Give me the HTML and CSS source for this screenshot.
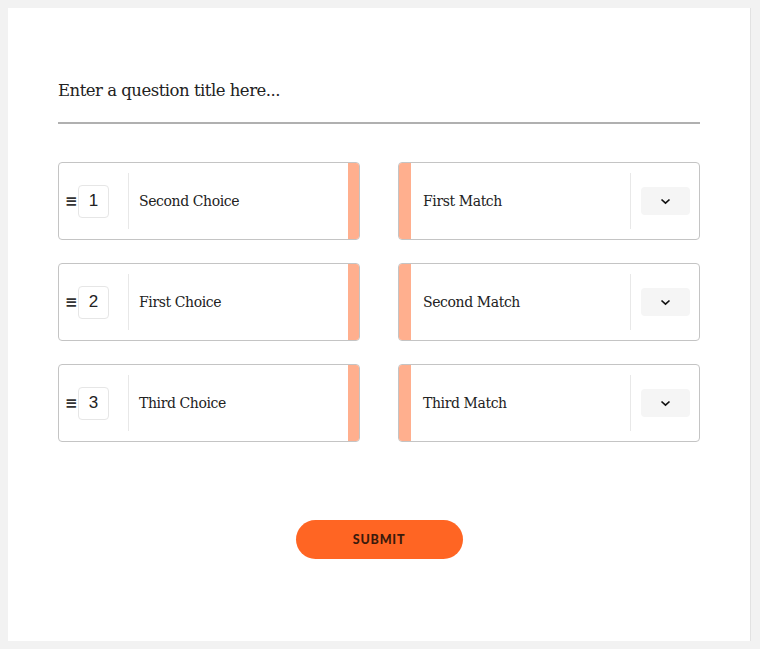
FILE: index.html
```html
<!DOCTYPE html>
<html>
<head>
<meta charset="utf-8">
<link rel="stylesheet" href="styles.css">
</head>
<body>
<div class="card">
  <div class="title">Enter a question title here...</div>
  <div class="grid">
    <div class="choice">
      <span class="handle">&#8801;</span>
      <span class="num">1</span>
      <span class="label">Second Choice</span>
      <span class="stripe"></span>
    </div>
    <div class="match">
      <span class="stripe"></span>
      <span class="label">First Match</span>
      <span class="dd"><svg width="11" height="7" viewBox="0 0 11 7"><path d="M1.5 1.5 L5.5 5.2 L9.5 1.5" fill="none" stroke="#111" stroke-width="1.7"/></svg></span>
    </div>
    <div class="choice">
      <span class="handle">&#8801;</span>
      <span class="num">2</span>
      <span class="label">First Choice</span>
      <span class="stripe"></span>
    </div>
    <div class="match">
      <span class="stripe"></span>
      <span class="label">Second Match</span>
      <span class="dd"><svg width="11" height="7" viewBox="0 0 11 7"><path d="M1.5 1.5 L5.5 5.2 L9.5 1.5" fill="none" stroke="#111" stroke-width="1.7"/></svg></span>
    </div>
    <div class="choice">
      <span class="handle">&#8801;</span>
      <span class="num">3</span>
      <span class="label">Third Choice</span>
      <span class="stripe"></span>
    </div>
    <div class="match">
      <span class="stripe"></span>
      <span class="label">Third Match</span>
      <span class="dd"><svg width="11" height="7" viewBox="0 0 11 7"><path d="M1.5 1.5 L5.5 5.2 L9.5 1.5" fill="none" stroke="#111" stroke-width="1.7"/></svg></span>
    </div>
  </div>
  <div class="actions">
    <button class="submit">SUBMIT</button>
  </div>
</div>
</body>
</html>
```
FILE: styles.css
```css
html, body {
  margin: 0;
  padding: 0;
  background: #f2f2f2;
}
body {
  padding: 8px 9px 8px 8px;
  height: 649px;
  box-sizing: border-box;
}
.card {
  background: #fff;
  height: 633px;
  box-sizing: border-box;
  padding: 73px 50px 0 50px;
  border-right: 1px solid #e2e2e2;
  width: 743px;
}
.title {
  font-family: "DejaVu Serif", serif;
  font-size: 16.5px;
  color: #222;
  letter-spacing: -0.5px;
  padding-bottom: 25px;
  border-bottom: 2px solid #b0b0b0;
  width: 642px;
  height: 16px;
}
.grid {
  display: grid;
  grid-template-columns: 302px 302px;
  column-gap: 38px;
  row-gap: 23px;
  margin-top: 38px;
}
.choice, .match {
  height: 78px;
  box-sizing: border-box;
  border: 1px solid #c4c4c4;
  border-radius: 4px;
  display: flex;
  align-items: center;
  overflow: hidden;
  font-family: "DejaVu Serif", serif;
}
.label {
  font-size: 14px;
  color: #222;
  letter-spacing: -0.4px;
  flex: 1;
}
.handle {
  font-family: "DejaVu Sans", sans-serif;
  font-weight: bold;
  font-size: 15px;
  color: #333;
  width: 12px;
  margin-left: 6px;
}
.num {
  width: 31px;
  height: 33px;
  box-sizing: border-box;
  border: 1px solid #e6e6e6;
  border-radius: 4px;
  display: flex;
  align-items: center;
  justify-content: center;
  font-family: "Liberation Sans", sans-serif;
  font-size: 17px;
  color: #222;
  margin-left: 1px;
  margin-right: 19px;
}
.choice .label {
  align-self: stretch;
  display: flex;
  align-items: center;
  border-left: 1px solid #e8e8e8;
  margin: 10px 0;
  padding-left: 10px;
}
.stripe {
  width: 11px;
  align-self: stretch;
  background: #ffaf8e;
  flex: none;
}
.match .stripe {
  width: 12px;
}
.match .label {
  padding-left: 12px;
  align-self: stretch;
  display: flex;
  align-items: center;
  border-right: 1px solid #e8e8e8;
  margin: 10px 0;
}
.dd {
  width: 49px;
  height: 28px;
  background: #f5f5f5;
  border-radius: 4px;
  display: flex;
  align-items: center;
  justify-content: center;
  margin: 0 9px 0 10px;
}
.actions {
  display: flex;
  justify-content: center;
  margin-top: 78px;
}
.submit {
  width: 167px;
  height: 39px;
  border: none;
  border-radius: 20px;
  background: #ff6523;
  font-family: "Lato", sans-serif;
  font-weight: 900;
  font-size: 12.5px;
  letter-spacing: 0.8px;
  color: #3a1a0c;
  cursor: pointer;
}
```
